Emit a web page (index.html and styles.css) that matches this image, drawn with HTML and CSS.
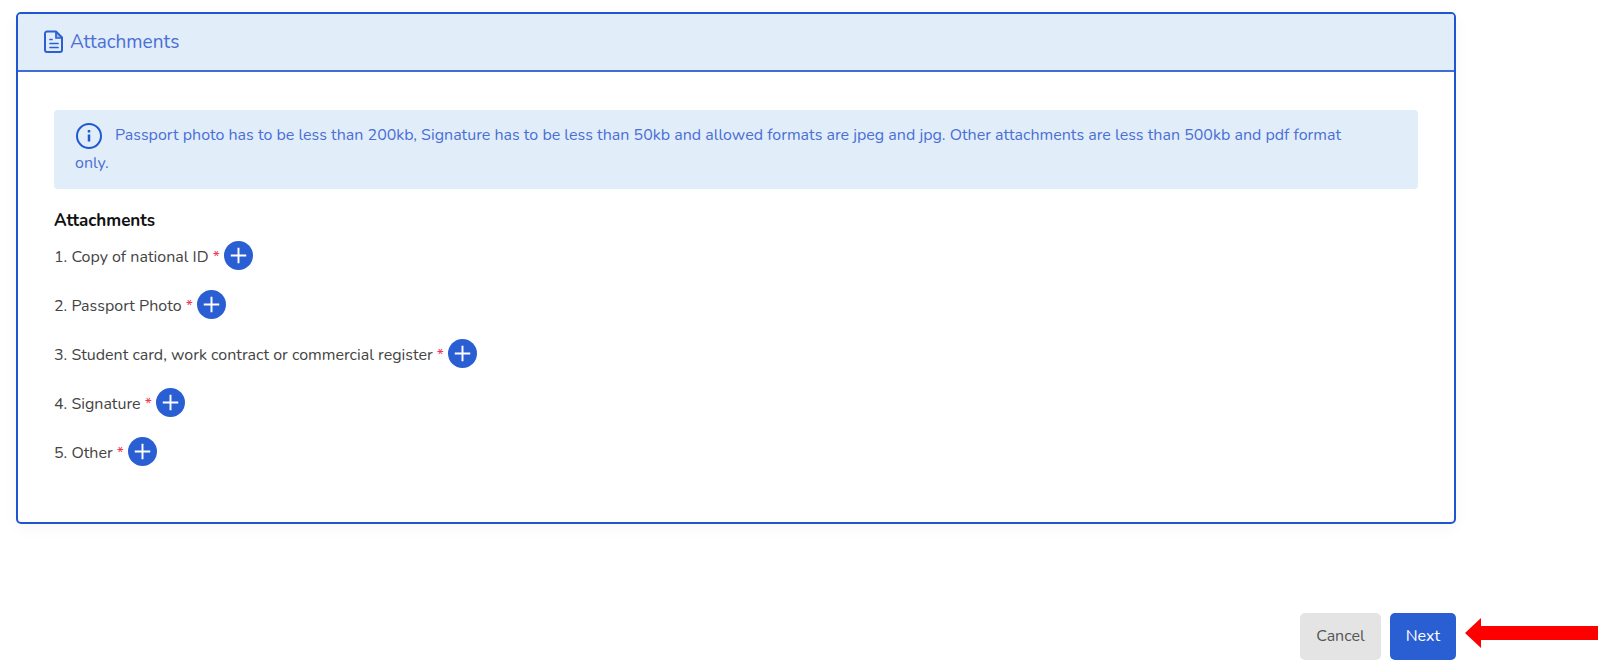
FILE: index.html
```html
<!DOCTYPE html>
<html lang="en">
<head>
<meta charset="utf-8">
<title>Attachments</title>
<meta name="viewport" content="width=device-width, initial-scale=1">
<link rel="stylesheet" href="styles.css">
</head>
<body>
<svg class="sprite" aria-hidden="true">
  <symbol id="plus" viewBox="0 0 30 30"><path d="M15 7v16M7 15h16" fill="none" stroke="#fff" stroke-width="2"/></symbol>
</svg>
<main class="page">
  <section class="card">
    <header class="card-header">
      <svg class="file-icon" viewBox="0 0 20 24" aria-hidden="true">
        <path d="M3 1.500H12l6 6v12.500a2 2 0 0 1-2 2H3a2 2 0 0 1-2-2V3.500a2 2 0 0 1 2-2Z" fill="none" stroke="currentColor" stroke-width="2" stroke-linejoin="round"/>
        <path d="M12 2v6h6Z" fill="currentColor" fill-opacity="0.35"/>
        <path d="M12 2v6h6M6 9.500h2M6 13.500h8M6 17.500h8" fill="none" stroke="currentColor" stroke-width="1.700" stroke-linecap="round"/>
      </svg>
      <h1 class="card-title">Attachments</h1>
    </header>
    <div class="card-body">
      <p class="alert"><svg class="info-icon" viewBox="0 0 28 28" aria-hidden="true"><circle cx="14" cy="14" r="12" fill="none" stroke="currentColor" stroke-width="2"/><path d="M14 12.500v7M14 8v2.500" fill="none" stroke="currentColor" stroke-width="2.500"/></svg>Passport photo has to be less than 200kb, Signature has to be less than 50kb and allowed formats are jpeg and jpg. Other attachments are less than 500kb and pdf format only.</p>
      <h2 class="list-title">Attachments</h2>
      <ul class="list">
        <li class="item"><span class="item-label">1. Copy of national ID <span class="required">*</span></span><button class="add" type="button" aria-label="Add copy of national ID"><svg class="plus"><use href="#plus"/></svg></button></li>
        <li class="item"><span class="item-label">2. Passport Photo <span class="required">*</span></span><button class="add" type="button" aria-label="Add passport photo"><svg class="plus"><use href="#plus"/></svg></button></li>
        <li class="item"><span class="item-label">3. Student card, work contract or commercial register <span class="required">*</span></span><button class="add" type="button" aria-label="Add student card, work contract or commercial register"><svg class="plus"><use href="#plus"/></svg></button></li>
        <li class="item"><span class="item-label">4. Signature <span class="required">*</span></span><button class="add" type="button" aria-label="Add signature"><svg class="plus"><use href="#plus"/></svg></button></li>
        <li class="item"><span class="item-label">5. Other <span class="required">*</span></span><button class="add" type="button" aria-label="Add other"><svg class="plus"><use href="#plus"/></svg></button></li>
      </ul>
    </div>
  </section>
  <div class="actions">
    <button class="btn btn-cancel" type="button">Cancel</button>
    <button class="btn btn-next" type="button">Next</button>
    <svg class="arrow" viewBox="0 0 133 30" aria-hidden="true"><path d="M0 15 16 0v8h117v14H16v8Z" fill="#f00"/></svg>
  </div>
</main>
</body>
</html>
```
FILE: styles.css
```css
* { box-sizing: border-box; }
body {
  margin: 0;
  background: #fff;
  color: #444;
  font-family: Nunito, Lato, "Noto Sans", sans-serif;
  font-size: 16px;
}
.sprite { position: absolute; width: 0; height: 0; }
.page { padding: 12px 0 0 16px; }
.card {
  margin-right: 144px;
  border: 2px solid #1f55d0;
  border-radius: 5px;
  box-shadow: 0 4px 16px rgba(0, 0, 0, 0.04);
}
.card-header {
  display: flex;
  align-items: center;
  gap: 6px;
  padding: 14px 26px;
  border-bottom: 2px solid #3f6cd6;
  border-radius: 3px 3px 0 0;
  background: #e1edf9;
  color: #2b5fd3;
}
.file-icon { width: 20px; height: 24px; }
.card-title { margin: 0; font-size: 19px; font-weight: 400; line-height: 28px; color: #4a6fd6; }
.card-body { padding: 38px 36px 56px; }
.alert {
  margin: 0 0 19px;
  padding: 12px 48px 12px 21px;
  border-radius: 4px;
  background: #e1edf9;
  color: #4a6fd6;
  font-size: 16px;
  line-height: 27px;
}
.info-icon {
  width: 28px;
  height: 28px;
  margin-right: 12px;
  vertical-align: -10px;
  color: #1f5ad3;
}
.list-title { margin: 0 0 7px; color: #111; font-size: 17px; font-weight: 700; line-height: 26px; }
.list { display: grid; gap: 20px; margin: 0; padding: 0; list-style: none; }
.item { display: flex; align-items: flex-start; gap: 4px; }
.item-label { padding-top: 4px; line-height: 25px; }
.required { color: #f0384f; }
.add {
  width: 29px;
  height: 29px;
  padding: 0;
  border: 0;
  border-radius: 50%;
  background: #2a5fd3;
}
.plus { display: block; width: 29px; height: 29px; }
.actions { display: flex; justify-content: flex-end; align-items: center; gap: 9px; margin-top: 89px; padding-right: 2px; }
.btn { padding: 0 16px; border: 0; border-radius: 5px; font-family: inherit; font-size: 16px; line-height: 47px; }
.btn-cancel { background: #e4e4e4; color: #555; }
.btn-next { background: #2a5fd3; color: #fff; }
.arrow { width: 133px; height: 30px; margin-bottom: 8px; }
```
